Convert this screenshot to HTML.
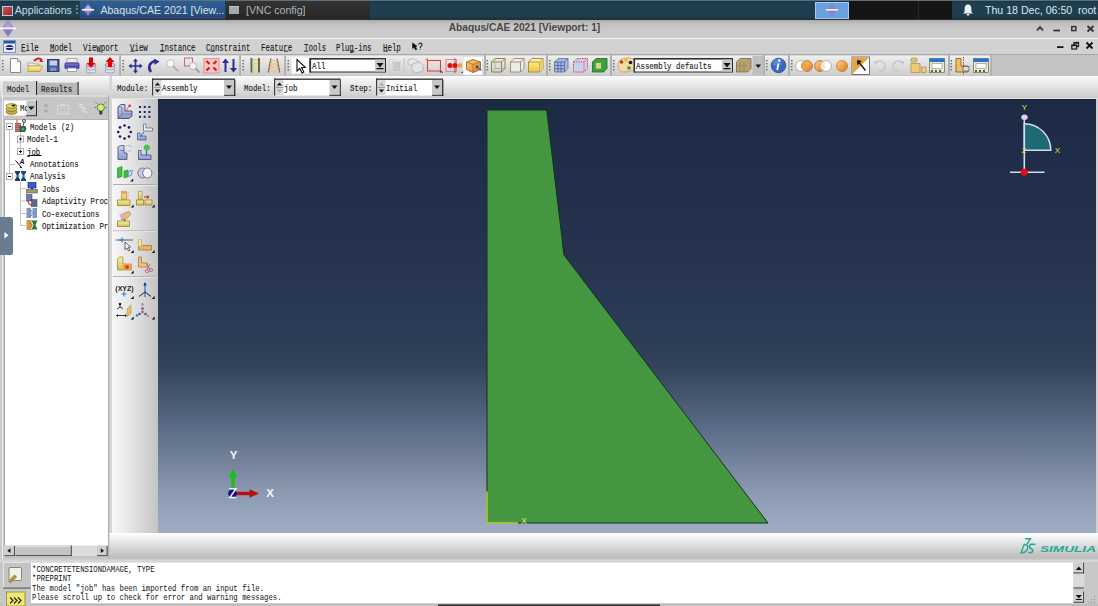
<!DOCTYPE html>
<html><head><meta charset="utf-8">
<style>
*{margin:0;padding:0;box-sizing:border-box}
html,body{width:1098px;height:606px;overflow:hidden;background:#d4d4d4;font-family:"Liberation Sans",sans-serif}
.a{position:absolute}
.mono{font-family:"Liberation Mono",monospace;white-space:pre;color:#1a1a1a;-webkit-text-stroke:0.12px currentColor}
.menu{top:49px;font-size:10.2px;line-height:0;transform:scaleX(0.727);transform-origin:0 0;color:#151515}
.lbl{font-size:9.6px;line-height:0;transform:scaleX(0.772);transform-origin:0 0;color:#151515}
.tree{font-size:9.4px;line-height:0;transform:scaleX(0.785);transform-origin:0 0;color:#151515}
.msg{font-size:9.2px;line-height:0;transform:scaleX(0.794);transform-origin:0 0;color:#111;-webkit-text-stroke:0}
.sans{font-family:"Liberation Sans",sans-serif;white-space:pre}
</style></head><body>
<!-- taskbar -->
<div class="a" style="left:0;top:0;width:1098px;height:20px;background:linear-gradient(#1a2f3c 0px,#1e3f50 3px,#1e3f4f 16px,#182e3a 20px)"></div>
<div class="a" style="left:0;top:0;width:1098px;height:1px;background:#5d6f7a"></div>
<div class="a" style="left:80px;top:1px;width:145px;height:18px;background:linear-gradient(#2d5d94,#2a5486 60%,#24456f)"></div>
<div class="a" style="left:226px;top:1px;width:144px;height:18px;background:linear-gradient(#343434,#262626)"></div>
<div class="a" style="left:815px;top:2px;width:34px;height:17px;background:#6aa0e0;border:1px solid #a4cdf6"></div>
<div class="a" style="left:849px;top:1px;width:103px;height:18px;background:#151515"></div>
<div class="a" style="left:0;top:19px;width:1098px;height:1px;background:#2a2f33"></div>

<!-- title bar -->
<div class="a" style="left:0;top:20px;width:1098px;height:18px;background:linear-gradient(#a9a9a9 0px,#c2c2c2 4px,#cacaca 10px,#cdcdcd 18px)"></div>
<!-- menu bar -->
<div class="a" style="left:0;top:38px;width:1098px;height:17px;background:#d2d2d2;border-top:1px solid #ececec"></div>
<!-- toolbar -->

<!-- module row -->



<!-- taskbar content -->
<div class="a" style="left:2px;top:6px;width:11px;height:10px;border:1px solid #c9c6cf;background:linear-gradient(135deg,#d85050,#8a2a30)"></div>
<div class="a sans" style="left:14.8px;top:5.2px;font-size:10.6px;line-height:10.5px;color:#cdd8df">Applications</div>
<div class="a" style="left:76px;top:5px;width:2px;height:10px;background:repeating-linear-gradient(#5f7f8e 0 2px,transparent 2px 3.5px)"></div>
<svg class="a" style="left:82px;top:4px" width="12" height="12" viewBox="0 0 12 12"><path d="M6 0 L11 5.5 L6 12 L1 5.5Z" fill="#8e80c8"/><path d="M6 1 L9 5 L3 5Z" fill="#b8b0e8"/><rect x="0" y="5" width="12" height="1.6" fill="#f4f4ff"/></svg>
<div class="a sans" style="left:100.4px;top:5.2px;font-size:10.6px;line-height:10.5px;color:#d6e0e8">Abaqus/CAE 2021 [View...</div>
<div class="a" style="left:229px;top:6px;width:10px;height:8px;background:#a8a8a8;border-top:1px solid #c8c8c8"></div>
<div class="a sans" style="left:246px;top:5.2px;font-size:10.6px;line-height:10.5px;color:#b2b2b2">[VNC config]</div>
<svg class="a" style="left:826px;top:4px" width="12" height="12" viewBox="0 0 12 12"><path d="M6 0 L11 5.5 L6 12 L1 5.5Z" fill="#8e80c8"/><rect x="0" y="5" width="12" height="1.6" fill="#f4f4ff"/></svg>
<div class="a" style="left:918px;top:1px;width:1px;height:18px;background:#262626"></div>
<svg class="a" style="left:962px;top:4px" width="12" height="12" viewBox="0 0 12 12"><path d="M6 0.5 C3.2 0.5 2.6 3 2.6 5 L2.6 8 L1 9.6 L11 9.6 L9.4 8 L9.4 5 C9.4 3 8.8 0.5 6 0.5Z" fill="#f2f4f5"/><rect x="4.6" y="10" width="2.8" height="1.6" rx="0.8" fill="#f2f4f5"/></svg>
<div class="a sans" style="left:985px;top:5.2px;font-size:10.6px;line-height:10.5px;color:#dfe6eb">Thu 18 Dec, 06:50</div>
<div class="a sans" style="left:1078px;top:5.2px;font-size:10.6px;line-height:10.5px;color:#dfe6eb">root</div>

<!-- title bar content -->
<svg class="a" style="left:0px;top:20px" width="16" height="17" viewBox="0 0 16 17"><path d="M8 0 L14 8 L8 17 L2 8Z" fill="#8a7cc8"/><path d="M8 1 L12 7 L4 7Z" fill="#aaa0e0"/><rect x="0" y="7.3" width="16" height="2" fill="#f6f6ff"/></svg>
<div class="a sans" style="left:448.7px;top:23px;font-size:10.2px;line-height:10.2px;font-weight:bold;color:#474747">Abaqus/CAE 2021 [Viewport: 1]</div>
<svg class="a" style="left:1030px;top:20px" width="68" height="18" viewBox="0 0 68 18">
<path d="M7 10.5 L10 7.2 L13 10.5" stroke="#333" stroke-width="1.8" fill="none"/>
<rect x="23.5" y="9.6" width="6.5" height="1.8" fill="#333"/>
<rect x="41.8" y="6.6" width="4" height="4" stroke="#333" stroke-width="1.5" fill="none"/>
<path d="M57.5 6 L63.5 11.5 M63.5 6 L57.5 11.5" stroke="#333" stroke-width="1.8"/>
</svg>
<!-- menu bar content -->
<svg class="a" style="left:0;top:0" width="500" height="55"><rect x="21.3" y="50.7" width="4.4" height="0.9" fill="#222"/><rect x="50.2" y="50.7" width="4.4" height="0.9" fill="#222"/><rect x="96.9" y="50.7" width="4.4" height="0.9" fill="#222"/><rect x="130.4" y="50.7" width="4.4" height="0.9" fill="#222"/><rect x="160.0" y="50.7" width="4.4" height="0.9" fill="#222"/><rect x="210.4" y="50.7" width="4.4" height="0.9" fill="#222"/><rect x="283.8" y="50.7" width="4.4" height="0.9" fill="#222"/><rect x="304.0" y="50.7" width="4.4" height="0.9" fill="#222"/><rect x="350.2" y="50.7" width="4.4" height="0.9" fill="#222"/><rect x="383.6" y="50.7" width="4.4" height="0.9" fill="#222"/></svg>
<div class="a" style="left:0;top:38px;width:1098px;height:1px;background:#f4f4f4"></div>
<svg class="a" style="left:3px;top:40px" width="13" height="13" viewBox="0 0 13 13"><rect x="0.5" y="0.5" width="12" height="12" fill="#e8ecf8" stroke="#7b8fc8"/><rect x="1" y="1" width="11" height="2.5" fill="#2a50b0"/><ellipse cx="6.5" cy="7.5" rx="3.8" ry="2.6" fill="#1a2880"/><rect x="3" y="7" width="7" height="1" fill="#dde"/></svg>
<div class="a mono menu" style="left:calc(21.6px - 0.8px)">File</div>
<div class="a mono menu" style="left:calc(50.5px - 0.8px)">Model</div>
<div class="a mono menu" style="left:calc(83.8px - 0.8px)">Viewport</div>
<div class="a mono menu" style="left:calc(130.7px - 0.8px)">View</div>
<div class="a mono menu" style="left:calc(160.3px - 0.8px)">Instance</div>
<div class="a mono menu" style="left:calc(206.3px - 0.8px)">Constraint</div>
<div class="a mono menu" style="left:calc(261.8px - 0.8px)">Feature</div>
<div class="a mono menu" style="left:calc(304.3px - 0.8px)">Tools</div>
<div class="a mono menu" style="left:calc(337.2px - 0.8px)">Plug-ins</div>
<div class="a mono menu" style="left:calc(383.9px - 0.8px)">Help</div>
<svg class="a" style="left:405px;top:38px" width="25" height="16" viewBox="405 38 25 16"><path d="M412.6 43 L412.6 48.6 L414 47.3 L415.6 50 L416.8 49.3 L415.3 46.6 L417 46.3Z" fill="#0a0a0a" stroke="#0a0a0a" stroke-width="0.6"/><path d="M418.6 44.6 Q419 43.2 420.5 43.2 Q422.2 43.3 422 45 Q421.8 46 420.6 46.7 L420.1 48" fill="none" stroke="#333" stroke-width="1.2"/><rect x="419.5" y="48.8" width="1.2" height="1" fill="#555"/></svg>
<svg class="a" style="left:1050px;top:39px" width="48" height="15" viewBox="0 0 48 15">
<rect x="7" y="7.2" width="6.5" height="1.8" fill="#1a1a1a"/>
<rect x="24" y="3.5" width="4.5" height="4" stroke="#1a1a1a" stroke-width="1.2" fill="none"/>
<rect x="24" y="3.5" width="4.5" height="1.2" fill="#1a1a1a"/>
<rect x="21.8" y="6" width="4.8" height="4" stroke="#1a1a1a" stroke-width="1.2" fill="#d2d2d2"/>
<rect x="21.8" y="6" width="4.8" height="1.2" fill="#1a1a1a"/>
<path d="M36.5 3.5 L42.5 9.5 M42.5 3.5 L36.5 9.5" stroke="#111" stroke-width="1.8"/>
</svg>

<svg class="a" style="left:0;top:0" width="1098" height="99" viewBox="0 0 1098 99">
<defs>
<linearGradient id="tbg" x1="0" y1="0" x2="0" y2="1"><stop offset="0" stop-color="#efefef"/><stop offset="1" stop-color="#cdcdcd"/></linearGradient>
<linearGradient id="mrow" x1="0" y1="0" x2="0" y2="1"><stop offset="0" stop-color="#fbfbfb"/><stop offset="1" stop-color="#c9c9c9"/></linearGradient>
<linearGradient id="yel" x1="0" y1="0" x2="0" y2="1"><stop offset="0" stop-color="#fff6b0"/><stop offset="1" stop-color="#e8c440"/></linearGradient>
<linearGradient id="org" x1="0" y1="0" x2="1" y2="1"><stop offset="0" stop-color="#ffd27a"/><stop offset="1" stop-color="#e07820"/></linearGradient>
<g id="grip"><rect x="0" y="0" width="1.5" height="1.5" fill="#707070"/><rect x="0" y="3" width="1.5" height="1.5" fill="#707070"/><rect x="0" y="6" width="1.5" height="1.5" fill="#707070"/><rect x="0" y="9" width="1.5" height="1.5" fill="#707070"/></g>
<g id="tri"><path d="M0 0 L2.5 0 L2.5 -2.5Z" fill="#111"/></g>
</defs>
<!-- toolbar base -->
<rect x="0" y="54" width="1098" height="1" fill="#a9a9a9"/>
<rect x="0" y="55" width="1098" height="21" fill="#c3c3c3"/>
<!-- groups -->
<rect x="0.5" y="55.5" width="119" height="20" fill="url(#tbg)"/>
<rect x="121" y="55.5" width="118.5" height="20" fill="url(#tbg)"/>
<rect x="241" y="55.5" width="43.5" height="20" fill="url(#tbg)"/>
<rect x="286" y="55.5" width="198" height="20" fill="url(#tbg)"/>
<rect x="486" y="55.5" width="60" height="20" fill="url(#tbg)"/>
<rect x="548" y="55.5" width="62" height="20" fill="url(#tbg)"/>
<rect x="612" y="55.5" width="151" height="20" fill="url(#tbg)"/>
<rect x="765" y="55.5" width="23" height="20" fill="url(#tbg)"/>
<rect x="790" y="55.5" width="158" height="20" fill="url(#tbg)"/>
<rect x="950" y="55.5" width="40.5" height="20" fill="url(#tbg)"/>
<g fill="#9e9e9e">
<rect x="119.5" y="55.5" width="1" height="20"/><rect x="239.5" y="55.5" width="1" height="20"/><rect x="284.5" y="55.5" width="1" height="20"/><rect x="484.5" y="55.5" width="1" height="20"/><rect x="546.5" y="55.5" width="1" height="20"/><rect x="610.5" y="55.5" width="1" height="20"/><rect x="763.5" y="55.5" width="1" height="20"/><rect x="788.5" y="55.5" width="1" height="20"/><rect x="948.5" y="55.5" width="1" height="20"/><rect x="990.5" y="55.5" width="1" height="20"/>
</g>
<use href="#grip" x="2" y="60"/><use href="#grip" x="122.5" y="60"/><use href="#grip" x="242.5" y="60"/><use href="#grip" x="287.5" y="60"/><use href="#grip" x="486.5" y="60"/><use href="#grip" x="549" y="60"/><use href="#grip" x="613" y="60"/><use href="#grip" x="766" y="60"/><use href="#grip" x="791" y="60"/><use href="#grip" x="950.5" y="60"/>

<!-- G1 icons -->
<path d="M10.5 58.5 L17.5 58.5 L20.5 61.5 L20.5 72.5 L10.5 72.5Z" fill="#fbfbfb" stroke="#8a8a8a"/>
<path d="M17.5 58.5 L17.5 61.5 L20.5 61.5" fill="#ddd" stroke="#8a8a8a" stroke-width="0.8"/>
<path d="M28 63 L33 63 L34 64 L39 64 L39 66 L28 66Z" fill="#f4f4f4" stroke="#999" stroke-width="0.8"/>
<path d="M28 66 L42.5 66 L40 71.5 L28 71.5Z" fill="url(#yel)" stroke="#b89a40" stroke-width="0.8"/>
<path d="M34 61 Q38 56.5 42 60" stroke="#d02020" stroke-width="2" fill="none"/><path d="M40.5 58 L43.5 62 L39.5 62Z" fill="#d02020"/>
<rect x="47.5" y="59.5" width="11.5" height="12" fill="#3a5a9a" stroke="#2a4070"/>
<rect x="49.5" y="60.5" width="7.5" height="5" fill="#c8d0e0"/>
<rect x="50" y="67.5" width="6.5" height="3.5" fill="#8090b0"/>
<rect x="67" y="58.5" width="10" height="4" fill="#f0f0f0" stroke="#999" stroke-width="0.8"/>
<rect x="64.5" y="62.5" width="15" height="6.5" rx="1.5" fill="#4a4aa8"/>
<rect x="66" y="63.5" width="12" height="2" fill="#7070c8"/>
<rect x="67.5" y="68" width="9" height="3.5" fill="#fff" stroke="#8888b8" stroke-width="0.8"/>
<g><ellipse cx="91" cy="71" rx="5" ry="2" fill="#dde4f0" stroke="#8a9ab8" stroke-width="0.8"/><ellipse cx="91" cy="68" rx="5" ry="2" fill="#eed0e0" stroke="#8a9ab8" stroke-width="0.8"/><ellipse cx="91" cy="65" rx="5" ry="2" fill="#e8c0d0" stroke="#6a7a98" stroke-width="0.8"/><rect x="89" y="57.5" width="4" height="6" fill="#e00000"/><path d="M86.5 63 L95.5 63 L91 67.5Z" fill="#e00000"/></g>
<g><ellipse cx="110" cy="71" rx="5" ry="2" fill="#dde4f0" stroke="#8a9ab8" stroke-width="0.8"/><ellipse cx="110" cy="68" rx="5" ry="2" fill="#eed0e0" stroke="#8a9ab8" stroke-width="0.8"/><ellipse cx="110" cy="65" rx="5" ry="2" fill="#e8c0d0" stroke="#6a7a98" stroke-width="0.8"/><rect x="108" y="61" width="4" height="6" fill="#e00000"/><path d="M105.5 62 L114.5 62 L110 57Z" fill="#e00000"/></g>

<!-- G2 icons -->
<g fill="#2e2e90" stroke="#2e2e90">
<path d="M135.5 60 L135.5 72 M129.5 66 L141.5 66" stroke-width="1.6"/>
<path d="M135.5 58.5 L133 61.5 L138 61.5Z M135.5 73.5 L133 70.5 L138 70.5Z M128.5 66 L131.5 63.5 L131.5 68.5Z M142.5 66 L139.5 63.5 L139.5 68.5Z" stroke="none"/>
<path d="M151 72 C148 68 148.5 63 155 61" fill="none" stroke-width="2.6"/>
<path d="M154 58.5 L159.5 61.5 L154.5 65Z" stroke="none"/>
<path d="M225.5 72 L225.5 61" stroke-width="2"/><path d="M225.5 58.5 L222 63 L229 63Z" stroke="none"/>
<path d="M233.5 59 L233.5 70" stroke-width="2"/><path d="M233.5 72.5 L230 68 L237 68Z" stroke="none"/>
</g>
<circle cx="170.5" cy="63.5" r="3.8" fill="#f8f8f8" stroke="#b8b8b8" stroke-width="0.9"/>
<path d="M173 66 L178.5 71.5" stroke="#a8b088" stroke-width="1.6"/>
<rect x="184.5" y="58" width="8" height="8" fill="none" stroke="#d06080" stroke-width="1"/>
<circle cx="193" cy="66" r="3.5" fill="#f4f4f4" stroke="#b0b0b0" stroke-width="0.9"/>
<path d="M195.5 68.5 L199.5 72.5" stroke="#909090" stroke-width="1.6"/>
<rect x="204" y="58.5" width="15" height="14.5" fill="#f0c8c8" stroke="#e08080" stroke-width="0.8"/>
<g stroke="#e01010" stroke-width="2"><path d="M206.5 61 L209.5 64 M216.5 61 L213.5 64 M206.5 70.5 L209.5 67.5 M216.5 70.5 L213.5 67.5"/></g>

<!-- G3 icons -->
<g><rect x="250.5" y="58" width="2" height="14.5" fill="#6a6a3a"/><rect x="258" y="58" width="2" height="14.5" fill="#6a6a3a"/>
<g fill="#d8d890"><rect x="252.5" y="59" width="5.5" height="2"/><rect x="252.5" y="62.5" width="5.5" height="2"/><rect x="252.5" y="66" width="5.5" height="2"/><rect x="252.5" y="69.5" width="5.5" height="2"/></g></g>
<g><path d="M271 58.5 L268.5 72.5 M277 58.5 L279.5 72.5" stroke="#8a6a4a" stroke-width="1.6"/>
<g fill="#e8c898"><rect x="270.5" y="59.5" width="7" height="2"/><rect x="270" y="63" width="8" height="2"/><rect x="269.5" y="66.5" width="9" height="2"/><rect x="269" y="70" width="10" height="2"/></g></g>

<!-- G4 -->
<rect x="291.5" y="57.5" width="18" height="16" fill="#fff"/>
<path d="M297 59.5 L297 71 L299.8 68.5 L302 73 L303.8 72 L301.6 67.6 L305.3 67.3Z" fill="#fff" stroke="#111" stroke-width="1.1"/>
<rect x="310" y="58.5" width="75.5" height="13.5" fill="#fff" stroke="#2a2a2a" stroke-width="1"/>
<rect x="310" y="58" width="76" height="1.6" fill="#333"/><rect x="309.5" y="58" width="1.6" height="14.5" fill="#333"/>
<rect x="375" y="59.5" width="10" height="12" fill="#c8c8c8"/>
<path d="M376.5 63 L383.5 63 L380 67.5Z" fill="#111"/><rect x="376.5" y="68" width="7" height="1.2" fill="#111"/>
<rect x="392.5" y="61.5" width="8" height="10" fill="#c8c8c8" stroke="#d8d8d8" stroke-width="0.8"/>
<rect x="389.5" y="59.5" width="6" height="6" fill="none" stroke="#d4d4d4" stroke-width="0.8"/>
<rect x="403.5" y="58" width="1" height="15" fill="#c4c4c4"/>
<path d="M408 60 L413 58.5 L418 61 L418 64 L413 66 L408 64Z" fill="#e8e8e8" stroke="#b4b4b4" stroke-width="0.8"/>
<path d="M412 64 L419 62 L423 65 L423 71 L416 73 L412 70Z" fill="#e4e4e4" stroke="#b0b0b0" stroke-width="0.8"/>
<rect x="427.5" y="60.5" width="13" height="10.5" fill="none" stroke="#e04040" stroke-width="1.1"/>
<path d="M425.5 60 L428 58.5 M441 71 L443 73" stroke="#e03030" stroke-width="1"/>
<path d="M439.5 72.5 L441.5 72.5 L441.5 70.5Z" fill="#111"/>
<rect x="446" y="59.5" width="10.5" height="12" fill="none" stroke="#f08080" stroke-width="1"/>
<circle cx="450" cy="65.5" r="2.5" fill="#e01010"/><circle cx="455" cy="65.5" r="2.5" fill="#e01010"/>
<path d="M455 58.5 L455 73" stroke="#e01010" stroke-width="0.8"/>
<circle cx="460" cy="65.5" r="2.3" fill="#e8a040"/>
<path d="M461 73 L463 73 L463 71Z" fill="#111"/>
<rect x="463" y="56.5" width="19.5" height="18.5" fill="#fcfcfc" stroke="#d8d8d8" stroke-width="0.6"/>
<path d="M466.5 62 L473 59.5 L480.5 62 L480.5 69.5 L473 72.5 L466.5 69.5Z" fill="url(#org)" stroke="#8a5a20" stroke-width="0.8"/>
<path d="M466.5 62 L473 64.5 L480.5 62 M473 64.5 L473 72.5" fill="none" stroke="#a86a20" stroke-width="0.7"/>
<circle cx="477" cy="67" r="1.4" fill="#1a4a6a"/><path d="M477 67 L481.5 70.5" stroke="#2a70c0" stroke-width="1.2"/>

<!-- G5 cubes -->
<g fill="none" stroke="#8a7a40" stroke-width="0.9">
<path d="M491.5 62 L495 58.5 L505 58.5 L505 68.5 L501.5 72 L491.5 72Z M491.5 62 L501.5 62 L505 58.5 M501.5 62 L501.5 72"/>
<path d="M491.5 72 L495 68.5 L505 68.5 M495 58.5 L495 68.5" stroke="#b0a070" stroke-width="0.7"/>
</g>
<path d="M510.5 62 L514 58.5 L524 58.5 L524 68.5 L520.5 72 L510.5 72Z" fill="#ececec" stroke="#9a8a60" stroke-width="0.9"/>
<path d="M510.5 62 L520.5 62 L524 58.5 M520.5 62 L520.5 72" fill="none" stroke="#9a8a60" stroke-width="0.9"/>
<path d="M528.5 62 L532 58.5 L543 58.5 L543 68.5 L539.5 72 L528.5 72Z" fill="url(#yel)" stroke="#a08830" stroke-width="0.9"/>
<path d="M528.5 62 L539.5 62 L543 58.5 M539.5 62 L539.5 72" fill="none" stroke="#a08830" stroke-width="0.8"/>
<path d="M539.5 62 L543 58.5 L543 68.5 L539.5 72Z" fill="#e8d060"/>

<!-- G6 cubes -->
<path d="M554.5 62 L558 58.5 L568 58.5 L568 68.5 L564.5 72 L554.5 72Z" fill="#a8b8e0" stroke="#6070a0" stroke-width="0.8"/>
<g stroke="#40508a" stroke-width="0.7" fill="none"><path d="M558 62 L558 72 M561 62 L561 72 M554.5 65.5 L564.5 65.5 M554.5 68.8 L564.5 68.8 M554.5 62 L564.5 62 L568 58.5 M564.5 62 L564.5 72"/></g>
<path d="M573.5 62 L577 58.5 L587.5 58.5 L587.5 68.5 L584 72 L573.5 72Z" fill="#c8d0f0" stroke="#e04060" stroke-width="1" stroke-dasharray="1.5 1"/>
<path d="M573.5 62 L584 62 L587.5 58.5 M584 62 L584 72" fill="none" stroke="#e04060" stroke-width="0.8" stroke-dasharray="1.5 1"/>
<path d="M592.5 62 L596 58.5 L607 58.5 L607 68.5 L603.5 72 L592.5 72Z" fill="#3aa040" stroke="#1e6a20" stroke-width="0.8"/>
<rect x="595.5" y="62.5" width="6" height="6.5" fill="#c8d890" stroke="#6a8a40" stroke-width="0.7"/>

<!-- G7 -->
<path d="M618 66 C617 60 623 57.5 629 58 C635 58.5 636.5 63 635 67 C633.5 70.5 630 72 624 72 C619.5 72 618.5 69 618 66Z" fill="#f4d8a8" stroke="#b89060" stroke-width="0.7"/>
<circle cx="621.5" cy="62" r="1.8" fill="#d03010"/><circle cx="626" cy="60" r="1.8" fill="#e8c020"/><circle cx="630.5" cy="62.5" r="1.8" fill="#101850"/><circle cx="629" cy="68" r="1.8" fill="#20a020"/>
<rect x="634.5" y="58.5" width="98" height="13.5" fill="#fff" stroke="#2a2a2a" stroke-width="1"/><rect x="634" y="58" width="99" height="1.6" fill="#333"/><rect x="633.5" y="58" width="1.6" height="14.5" fill="#333"/>
<rect x="722" y="59.5" width="10" height="12" fill="#c8c8c8"/>
<path d="M723.5 63 L730.5 63 L727 67.5Z" fill="#111"/><rect x="723.5" y="68" width="7" height="1.2" fill="#111"/>
<path d="M736.5 62 L740 58.5 L751 58.5 L751 68.5 L747.5 72 L736.5 72Z" fill="#b8a070" stroke="#7a6a40" stroke-width="0.8"/>
<g stroke="#8a7a50" stroke-width="0.5"><path d="M740 62 L740 72 M744 62 L744 72 M736.5 66 L747.5 66"/></g>
<rect x="752.5" y="56" width="11" height="19" fill="#c0c0c0"/>
<path d="M755.5 64.5 L761 64.5 L758.2 68Z" fill="#111"/>

<!-- G8 info -->
<circle cx="778.5" cy="65.5" r="7.3" fill="#3a6ac0" stroke="#2a4a90" stroke-width="0.8"/>
<ellipse cx="777" cy="62.5" rx="4.5" ry="3.5" fill="#6a9ae0" opacity="0.6"/>
<path d="M778.5 63.5 L777.2 70" stroke="#fff" stroke-width="1.8"/><circle cx="779.3" cy="60.5" r="1.2" fill="#fff"/>

<!-- G9 -->
<circle cx="801" cy="66" r="5.4" fill="#fff" stroke="#a0a0a0" stroke-width="0.8"/>
<circle cx="807" cy="66" r="5.4" fill="url(#org)" stroke="#a07030" stroke-width="0.8"/>
<path d="M804 61.5 A5.4 5.4 0 0 1 804 70.5 A5.4 5.4 0 0 1 804 61.5Z" fill="#f0a040"/>
<circle cx="820" cy="66" r="5.4" fill="url(#org)" stroke="#a07030" stroke-width="0.8"/>
<circle cx="826" cy="66" r="5.4" fill="#fff" stroke="#a0a0a0" stroke-width="0.8"/>
<path d="M823 61.5 A5.4 5.4 0 0 1 823 70.5 A5.4 5.4 0 0 1 823 61.5Z" fill="#f4e4d0"/>
<circle cx="842" cy="66" r="5.5" fill="url(#org)" stroke="#b07030" stroke-width="0.7"/>
<rect x="852" y="57" width="17.5" height="17.5" fill="#fff" stroke="#555" stroke-width="0.8"/>
<path d="M852.5 57.5 L869 57.5 L852.5 74Z" fill="#e8a440"/>
<path d="M857 60 L862 61 L860 62.5 L866 70 L865 71 L859 63.5 L857.5 65.5Z" fill="#111"/>
<path d="M876 63 A5 5 0 1 1 879 71" fill="none" stroke="#c8c8c8" stroke-width="1.6"/><path d="M873.5 61 L878.5 61.5 L875 65Z" fill="#c8c8c8"/>
<path d="M902 63 A5 5 0 1 0 899 71" fill="none" stroke="#c8c8c8" stroke-width="1.6"/><path d="M904.5 61 L899.5 61.5 L903 65Z" fill="#c8c8c8"/>
<rect x="911" y="58" width="6" height="4" rx="1" fill="#e8c070" stroke="#a08040" stroke-width="0.6"/>
<rect x="911" y="63.5" width="9" height="9" fill="#f0c878" stroke="#a08040" stroke-width="0.6"/>
<rect x="921.5" y="67" width="4.5" height="5.5" fill="#f0c878" stroke="#a08040" stroke-width="0.6"/>
<rect x="929.5" y="58.5" width="15" height="14" fill="#e8e8d8" stroke="#6a6a40" stroke-width="0.7"/>
<rect x="929.5" y="58.5" width="15" height="3.5" fill="#2a70c8"/>
<rect x="932" y="63.5" width="10" height="5" fill="#fff" stroke="#8a8a70" stroke-width="0.6"/>
<g fill="#4a6a2a"><rect x="931" y="70" width="2" height="2"/><rect x="935" y="70" width="2" height="2"/><rect x="939" y="70" width="2" height="2"/></g>

<!-- G10 -->
<path d="M956 58.5 L961 58.5 L961 66 L968 66 L968 72 L956 72Z" fill="#f0c060" stroke="#7a5a20" stroke-width="0.8"/>
<path d="M963.5 57 L963.5 75" stroke="#e02020" stroke-width="0.9" stroke-dasharray="1.5 1"/>
<rect x="963" y="66.5" width="6" height="4.5" fill="#dcdcdc" stroke="#444" stroke-width="0.6"/>
<rect x="973.5" y="58.5" width="15" height="14" fill="#e8e8d8" stroke="#6a6a40" stroke-width="0.7"/>
<rect x="973.5" y="58.5" width="15" height="3.5" fill="#2a70c8"/>
<rect x="976" y="63.5" width="10" height="5" fill="#fff" stroke="#8a8a70" stroke-width="0.6"/>
<g fill="#4a6a2a"><rect x="975" y="70" width="2" height="2"/><rect x="979" y="70" width="2" height="2"/><rect x="983" y="70" width="2" height="2"/></g>

<!-- module row -->
<rect x="0" y="76" width="1098" height="22.5" fill="url(#mrow)"/>
<rect x="112" y="98" width="986" height="1" fill="#e4e4e4"/>
<g id="combos">
<g transform="translate(152,78.5)">
<rect x="0" y="0" width="83" height="17" fill="#fff"/>
<rect x="0" y="0" width="83" height="1.4" fill="#3a3a3a"/><rect x="0" y="0" width="1.4" height="17" fill="#3a3a3a"/>
<rect x="82" y="1" width="1.4" height="16.4" fill="#3a3a3a"/><rect x="72" y="16" width="11.4" height="1.4" fill="#3a3a3a"/>
<rect x="1.5" y="1.5" width="8" height="15" fill="#d8d8d8"/>
<path d="M2.8 7 L5.5 4 L8.2 7Z M2.8 11 L5.5 14 L8.2 11Z" fill="#111"/>
<rect x="2" y="8.5" width="7" height="1" fill="#999"/>
<rect x="72" y="1.5" width="10" height="14.5" fill="#c8c8c8"/>
<path d="M74 7 L80 7 L77 10.5Z" fill="#111"/>
</g>
<g transform="translate(274,78.5)">
<rect x="0" y="0" width="66.5" height="17" fill="#fff"/>
<rect x="0" y="0" width="66.5" height="1.4" fill="#3a3a3a"/><rect x="0" y="0" width="1.4" height="17" fill="#3a3a3a"/>
<rect x="65.5" y="1" width="1.4" height="16.4" fill="#3a3a3a"/><rect x="55.5" y="16" width="11.4" height="1.4" fill="#3a3a3a"/>
<rect x="1.5" y="1.5" width="8" height="15" fill="#d8d8d8"/>
<path d="M2.8 7 L5.5 4 L8.2 7Z" fill="#111"/><path d="M2.8 11 L5.5 14 L8.2 11Z" fill="#aaa"/>
<rect x="2" y="8.5" width="7" height="1" fill="#999"/>
<rect x="55.5" y="1.5" width="10" height="14.5" fill="#c8c8c8"/>
<path d="M57.5 7 L63.5 7 L60.5 10.5Z" fill="#111"/>
</g>
<g transform="translate(376,78.5)">
<rect x="0" y="0" width="67" height="17" fill="#fff"/>
<rect x="0" y="0" width="67" height="1.4" fill="#3a3a3a"/><rect x="0" y="0" width="1.4" height="17" fill="#3a3a3a"/>
<rect x="66" y="1" width="1.4" height="16.4" fill="#3a3a3a"/><rect x="56" y="16" width="11.4" height="1.4" fill="#3a3a3a"/>
<rect x="1.5" y="1.5" width="8" height="15" fill="#d8d8d8"/>
<path d="M2.8 7 L5.5 4 L8.2 7Z" fill="#aaa"/><path d="M2.8 11 L5.5 14 L8.2 11Z" fill="#111"/>
<rect x="2" y="8.5" width="7" height="1" fill="#999"/>
<rect x="56" y="1.5" width="10" height="14.5" fill="#c8c8c8"/>
<path d="M58 7 L64 7 L61 10.5Z" fill="#111"/>
</g>
</g>
</svg>

<div class="a mono lbl" style="left:117px;top:88.8px">Module:</div>
<div class="a mono lbl" style="left:161.5px;top:88.8px">Assembly</div>
<div class="a mono lbl" style="left:243.5px;top:88.8px">Model:</div>
<div class="a mono lbl" style="left:283.5px;top:88.8px">job</div>
<div class="a mono lbl" style="left:350px;top:88.8px">Step:</div>
<div class="a mono lbl" style="left:385.5px;top:88.8px">Initial</div>
<div class="a mono lbl" style="left:311.5px;top:67.3px">All</div>
<div class="a mono lbl" style="left:636px;top:67.3px">Assembly defaults</div>
<!-- left panel -->
<svg class="a" style="left:0;top:76px" width="112" height="486" viewBox="0 76 112 486">
<defs>
<linearGradient id="yel2" x1="0" y1="0" x2="0" y2="1"><stop offset="0" stop-color="#fff3a0"/><stop offset="1" stop-color="#d8b030"/></linearGradient>
</defs>
<rect x="0" y="76" width="112" height="486" fill="#c9c9c9"/>
<rect x="0" y="76" width="112" height="22.5" fill="url(#mrow)"/>
<!-- tabs -->
<path d="M2 98 L2 81 L36.5 81 L36.5 98Z" fill="#cdcdcd"/>
<path d="M2 98 L2 80.8 L36 80.8" fill="none" stroke="#f4f4f4" stroke-width="1"/>
<rect x="36" y="81" width="1.3" height="14" fill="#2a2a2a"/>
<rect x="37.3" y="82.5" width="41" height="12.5" fill="#b8b8b8"/>
<rect x="37.3" y="82" width="41" height="0.8" fill="#e0e0e0"/>
<rect x="77.5" y="82" width="1.2" height="13" fill="#3a3a3a"/>
<!-- panel -->
<rect x="2" y="95.5" width="106.5" height="465" fill="#c6c6c6"/>
<rect x="2" y="95.5" width="106.5" height="1" fill="#ececec"/>
<rect x="2" y="95.5" width="1" height="465" fill="#ececec"/>
<rect x="108.3" y="95.5" width="1" height="465" fill="#a0a0a0"/>
<rect x="109.3" y="76" width="2.7" height="486" fill="#d6d6d6"/>
<!-- combo Mo -->
<rect x="4" y="100.5" width="32.5" height="15" fill="#fff"/>
<rect x="36" y="100.5" width="1" height="15.5" fill="#2a2a2a"/><rect x="26" y="115.2" width="11" height="1" fill="#2a2a2a"/>
<rect x="26.5" y="101" width="9.5" height="14" fill="#c4c4c4"/>
<path d="M28 106.5 L34.5 106.5 L31.2 110Z" fill="#111"/>
<g><ellipse cx="11.5" cy="112" rx="5.5" ry="2.3" fill="#c8b040" stroke="#6a5a10" stroke-width="0.7"/><ellipse cx="11.5" cy="109" rx="5.5" ry="2.3" fill="#d8c050" stroke="#6a5a10" stroke-width="0.7"/><ellipse cx="11.5" cy="106" rx="5.5" ry="2.3" fill="#e8d870" stroke="#6a5a10" stroke-width="0.7"/><ellipse cx="13.5" cy="105.5" rx="2" ry="1" fill="#222"/></g>
<!-- icon row -->
<path d="M43.5 106.5 L46 103.2 L48.5 106.5Z M43.5 110 L46 113.3 L48.5 110Z" fill="#a8a8a8"/><rect x="43.5" y="107.8" width="5" height="1" fill="#b8b8b8"/>
<rect x="57.5" y="105.5" width="11" height="8.5" fill="none" stroke="#dadada" stroke-width="1"/><rect x="60" y="103.8" width="5" height="1.8" fill="#dadada"/><rect x="60" y="107.5" width="5" height="4" fill="none" stroke="#d0d0d0" stroke-width="0.8"/>
<path d="M78 104 L82 104.5 L80 107 L85 108 L82 110.5 L87.5 112.5" fill="none" stroke="#dcdcdc" stroke-width="1.3"/>
<circle cx="100.8" cy="107.5" r="3.6" fill="#e8e870" stroke="#3a8a3a" stroke-width="1"/><rect x="99.3" y="111" width="3" height="3.5" fill="#2a4a2a"/>
<path d="M95.5 102 L97 103.5 M106 102 L104.5 103.5 M94.5 107.5 L96 107.5 M105.5 107.5 L107 107.5" stroke="#556" stroke-width="0.8"/>
<!-- tree -->
<rect x="4" y="119" width="104" height="427" fill="#fff"/>
<rect x="4" y="119" width="1" height="427" fill="#a8a8a8"/>
<rect x="4" y="119" width="104" height="0.8" fill="#a0a0a0"/>
<!-- tree lines -->
<g stroke="#c4c4c4" stroke-width="1" fill="none">
<path d="M9.5 130 L9.5 173 M9.5 164.5 L15 164.5"/>
<path d="M20.5 131 L20.5 136 M20.5 142 L20.5 148"/>
<path d="M20.5 182 L20.5 226 M20.5 188.5 L26 188.5 M20.5 201 L26 201 M20.5 213.5 L26 213.5 M20.5 225.5 L26 225.5"/>
</g>
<!-- expanders -->
<g fill="#fff" stroke="#9a9a9a" stroke-width="0.8">
<rect x="6.5" y="123.5" width="6" height="6"/><rect x="17.5" y="136" width="6" height="6"/><rect x="17.5" y="148.5" width="6" height="6"/><rect x="6.5" y="173.5" width="6" height="6"/>
</g>
<g stroke="#111" stroke-width="1">
<path d="M8 126.5 L11 126.5"/><path d="M19 139 L22 139 M20.5 137.5 L20.5 140.5"/><path d="M19 151.5 L22 151.5 M20.5 150 L20.5 153"/><path d="M8 176.5 L11 176.5"/>
</g>
<!-- models icon -->
<g><rect x="15" y="123" width="6" height="9" fill="#a05050"/><path d="M15 124.5 L21 124.5 M15 126.5 L21 126.5 M15 128.5 L21 128.5 M15 130.5 L21 130.5" stroke="#e0a0a0" stroke-width="0.7"/>
<path d="M19.5 126 L25.5 126 L26.5 129 L25 132 L19.5 132Z" fill="#2a6a4a"/><circle cx="23" cy="129" r="1.5" fill="#5aa07a"/>
<path d="M17 119.5 L17 123" stroke="#e03050" stroke-width="1"/><circle cx="24" cy="121" r="1.5" fill="#fff" stroke="#222" stroke-width="0.8"/><path d="M24 122.5 L23 126" stroke="#222" stroke-width="0.8"/></g>
<!-- annotations icon -->
<path d="M15.5 160.5 L21.5 167.5" stroke="#111" stroke-width="1"/><path d="M20.5 166 L22.5 168.5 L19.5 167.5Z" fill="#111"/><text x="22" y="163.8" font-family="Liberation Sans" font-weight="bold" font-style="italic" font-size="7" text-anchor="middle" fill="#111">A</text>
<!-- analysis icon -->
<g><path d="M15 171 L20 171 L20 172.5 L18.3 175 L18.3 177 L20 179.5 L20 181 L15 181 L15 179.5 L16.7 177 L16.7 175 L15 172.5Z" fill="#1a3a6a"/><rect x="15.5" y="175.5" width="4" height="1.2" fill="#4a8ac8"/>
<path d="M21 171 L26 171 L26 172.5 L24.3 175 L24.3 177 L26 179.5 L26 181 L21 181 L21 179.5 L22.7 177 L22.7 175 L21 172.5Z" fill="#1a4a7a"/><rect x="21.5" y="175.5" width="4" height="1.2" fill="#5a9ad0"/></g>
<!-- jobs icon -->
<rect x="28" y="182.5" width="8" height="5.5" fill="#3a5ad0" stroke="#1a2a80" stroke-width="0.7"/><rect x="31" y="188" width="2" height="1.5" fill="#2a2a50"/><rect x="26.5" y="189.5" width="11" height="3.5" fill="#9a9a7a" stroke="#5a5a40" stroke-width="0.6"/>
<!-- adaptivity icon -->
<rect x="26.5" y="194.5" width="5.5" height="6.5" fill="#6a7aaa" stroke="#3a3a6a" stroke-width="0.5"/><rect x="31.5" y="199.5" width="5.5" height="7" fill="#5a6a8a" stroke="#2a3a5a" stroke-width="0.5"/><path d="M28 201 Q28.5 205 32 205" stroke="#e01010" stroke-width="1.1" fill="none"/>
<!-- co-exec icon -->
<rect x="26.5" y="208" width="4.5" height="10" fill="#7a9ac0"/><rect x="32.5" y="208" width="4.5" height="10" fill="#7a9ac0"/><path d="M31 210 L32.5 213 L31 216" stroke="#e04060" stroke-width="1" fill="none"/><rect x="31" y="211" width="1.5" height="4" fill="#c0c8d8"/>
<!-- optimization icon -->
<rect x="26.5" y="220" width="5" height="10" fill="#c8a040"/><path d="M31.5 220.5 L37.5 220.5 L35.5 225 L37.5 229.5 L31.5 229.5 L33.5 225Z" fill="#2a7a3a"/><path d="M30 223 L32.5 225 L30 227" stroke="#e03030" stroke-width="0.9" fill="none"/>
<!-- job underline -->
<rect x="27.5" y="155" width="14" height="1" fill="#111"/>
<!-- slide tab -->
<path d="M0 217 L10.5 217 Q13 217 13 219.5 L13 252.5 Q13 255 10.5 255 L0 255Z" fill="#6c7c90"/>
<path d="M4.5 232 L8.5 235.2 L4.5 238.4Z" fill="#fff"/>
<!-- h scrollbar -->
<rect x="4.5" y="545.5" width="103" height="10.5" fill="#dcdcdc"/>
<rect x="4.5" y="545.5" width="10.5" height="10.5" fill="#d0d0d0"/><rect x="14" y="546" width="1" height="10" fill="#444"/><rect x="4.5" y="555.2" width="10.5" height="0.9" fill="#444"/>
<path d="M7.3 550.7 L10.5 548.3 L10.5 553.1Z" fill="#111"/>
<rect x="15.5" y="545.5" width="56" height="10.5" fill="#c4c4c4"/><rect x="70.8" y="545.5" width="1" height="10.5" fill="#444"/><rect x="15.5" y="555.2" width="56" height="0.9" fill="#444"/><rect x="15.5" y="545.8" width="55" height="0.8" fill="#ececec"/>
<rect x="97" y="545.5" width="10.5" height="10.5" fill="#d0d0d0"/><rect x="106.6" y="546" width="1" height="10" fill="#444"/><rect x="97" y="555.2" width="10.5" height="0.9" fill="#444"/>
<path d="M104 550.7 L100.8 548.3 L100.8 553.1Z" fill="#111"/>
</svg>
<div class="a mono lbl" style="left:7.2px;top:90px">Model</div>
<div class="a mono lbl" style="left:41.3px;top:90px">Results</div>
<div class="a" style="left:19px;top:100px;width:7.5px;height:15px;overflow:hidden"><div class="a mono lbl" style="left:0.5px;top:9.2px">Mo</div></div>
<div class="a mono tree" style="left:29.5px;top:127.8px">Models (2)</div>
<div class="a mono tree" style="left:26.8px;top:140.2px">Model-1</div>
<div class="a mono tree" style="left:27.3px;top:152.6px">job</div>
<div class="a mono tree" style="left:29.5px;top:165px">Annotations</div>
<div class="a mono tree" style="left:29.5px;top:177.4px">Analysis</div>
<div class="a mono tree" style="left:41.8px;top:189.8px">Jobs</div>
<div class="a mono tree" style="left:41.8px;top:202.2px">Adaptivity Proc</div>
<div class="a mono tree" style="left:41.8px;top:214.6px">Co-executions</div>
<div class="a mono tree" style="left:41.8px;top:227px">Optimization Pr</div>


<!-- toolbox -->
<svg class="a" style="left:112px;top:99px" width="46" height="434" viewBox="112 99 46 434">
<defs>
<linearGradient id="tbx" x1="0" y1="0" x2="1" y2="0"><stop offset="0" stop-color="#f7f7f7"/><stop offset="0.55" stop-color="#dedede"/><stop offset="1" stop-color="#c3c3c3"/></linearGradient>
<linearGradient id="blu" x1="0" y1="0" x2="0" y2="1"><stop offset="0" stop-color="#d0d8f4"/><stop offset="1" stop-color="#8898d0"/></linearGradient>
<linearGradient id="yl3" x1="0" y1="0" x2="0" y2="1"><stop offset="0" stop-color="#f8f0a0"/><stop offset="1" stop-color="#d8c050"/></linearGradient>
</defs>
<rect x="112" y="99" width="46" height="434" fill="url(#tbx)"/>
<rect x="113" y="184" width="43" height="0.9" fill="#a8a8a8"/><rect x="113" y="185" width="43" height="0.7" fill="#f4f4f4"/>
<rect x="113" y="230.5" width="43" height="0.9" fill="#a8a8a8"/><rect x="113" y="231.4" width="43" height="0.7" fill="#f4f4f4"/>
<rect x="113" y="276" width="43" height="0.9" fill="#a8a8a8"/><rect x="113" y="276.9" width="43" height="0.7" fill="#f4f4f4"/>
<!-- row1 -->
<path d="M118 107 L121 104.5 L125 104.5 L125 111 L132 111 L132 116 L129 118.5 L118 118.5Z" fill="url(#blu)" stroke="#4a4a6a" stroke-width="0.9"/>
<path d="M118 107 L122 107 L122 114 L132 114 M122 114 L118 118.5" fill="none" stroke="#5a5a80" stroke-width="0.6"/>
<path d="M126.5 111 Q127 108 129.5 106" stroke="#d04040" stroke-width="0.8" fill="none"/><circle cx="129.7" cy="105.7" r="1.3" fill="#e02020"/>
<g fill="#1e1e6e"><rect x="139" y="106" width="2" height="2"/><rect x="143.7" y="106" width="2" height="2"/><rect x="148.4" y="106" width="2" height="2"/><rect x="139" y="111" width="2" height="2"/><rect x="143.7" y="111" width="2" height="2"/><rect x="148.4" y="111" width="2" height="2"/><rect x="139" y="115.8" width="2" height="2"/><rect x="143.7" y="115.8" width="2" height="2"/><rect x="148.4" y="115.8" width="2" height="2"/></g>
<!-- row2 -->
<g fill="#1e1e5e"><circle cx="124.5" cy="125.5" r="1.35"/><circle cx="129" cy="127.4" r="1.35"/><circle cx="130.8" cy="132" r="1.35"/><circle cx="129" cy="136.6" r="1.35"/><circle cx="124.5" cy="138.5" r="1.35"/><circle cx="120" cy="136.6" r="1.35"/><circle cx="118.2" cy="132" r="1.35"/><circle cx="120" cy="127.4" r="1.35"/></g>
<path d="M143.5 124 L146 124 L146 128 L152.5 128 L152.5 131 L143.5 131Z" fill="#eceef4" stroke="#6a6a80" stroke-width="0.8"/>
<path d="M137.5 133 L140 133 L140 136 L146 136 L146 140 L137.5 140Z" fill="url(#blu)" stroke="#4a5a8a" stroke-width="0.8"/>
<path d="M140 137 L144 132" stroke="#2a60c0" stroke-width="1"/>
<!-- row3 -->
<path d="M118 147 L121 145.5 L124 145.5 L124 153 L127 153 L127 159.5 L118 159.5Z" fill="url(#blu)" stroke="#4a4a6a" stroke-width="0.8"/>
<path d="M124 147 L126.5 145.5 L130 145.5 L132 147 M126 151 L131 151" stroke="#8a9ac0" stroke-width="0.9" stroke-dasharray="1.2 0.8" fill="none"/>
<path d="M120.5 150.5 L124.5 150.5" stroke="#3a80d0" stroke-width="1"/>
<path d="M138.5 150.5 L141 150.5 L141 155 L151 155 L151 159.5 L138.5 159.5Z" fill="url(#blu)" stroke="#4a4a6a" stroke-width="0.8"/>
<path d="M146.5 149 L146.5 156" stroke="#2a70c0" stroke-width="1.2"/><circle cx="146.8" cy="147.5" r="2.6" fill="#40d040" stroke="#2a9a2a" stroke-width="0.5"/>
<!-- row4 -->
<path d="M117.5 168 L122 166.5 L122 176.5 L117.5 178Z" fill="#40c040" stroke="#208a20" stroke-width="0.6"/>
<path d="M124 171 L127.5 170 L127.5 177 L124 178Z" fill="#40c040" stroke="#208a20" stroke-width="0.6"/>
<path d="M128.5 171 L132.5 170.5 L131 175.5 L128 176.5Z" fill="#cce0f4" stroke="#3a70c0" stroke-width="0.7"/>
<path d="M130.2 181.5 L133.2 181.5 L133.2 178.5Z" fill="#111"/>
<ellipse cx="142.5" cy="173" rx="4.6" ry="5" fill="#c8c8e8" stroke="#606070" stroke-width="0.8"/>
<ellipse cx="147.3" cy="173" rx="4.6" ry="5" fill="#f4f4f8" stroke="#606070" stroke-width="0.8"/>
<!-- row5 -->
<rect x="121.5" y="191.5" width="5" height="8.5" fill="url(#yl3)" stroke="#b09040" stroke-width="0.6"/>
<path d="M122 193 L126 193" stroke="#e06030" stroke-width="1"/>
<path d="M128 192 L128 199" stroke="#e05080" stroke-width="0.6" stroke-dasharray="1 0.6"/>
<rect x="117.5" y="200" width="12.5" height="5.5" fill="url(#yl3)" stroke="#8a7a30" stroke-width="0.7"/>
<path d="M130.7 207.5 L133.7 207.5 L133.7 204.5Z" fill="#111"/>
<rect x="138.5" y="191.5" width="3.5" height="8.5" fill="url(#yl3)" stroke="#9a8a40" stroke-width="0.6"/>
<rect x="136.5" y="200" width="7" height="5" fill="url(#yl3)" stroke="#8a7a30" stroke-width="0.7"/>
<rect x="145" y="200" width="7" height="5" fill="url(#yl3)" stroke="#8a7a30" stroke-width="0.7"/>
<path d="M144 197 L147.5 197" stroke="#e03020" stroke-width="1.2"/><path d="M147 195 L149.5 197 L147 199Z" fill="#e03020"/>
<path d="M151.7 207.5 L154.7 207.5 L154.7 204.5Z" fill="#111"/>
<!-- row6 -->
<rect x="117.5" y="221" width="12" height="5.5" fill="url(#yl3)" stroke="#8a7a30" stroke-width="0.7"/>
<path d="M121 220 L124 213 L129 211.5 L131 214 L126.5 219Z" fill="#e8c070" stroke="#a08040" stroke-width="0.6"/>
<ellipse cx="122" cy="215.5" rx="2.5" ry="2.2" fill="#e8a0d0" opacity="0.9"/><path d="M125 221 L124 219" stroke="#222" stroke-width="0.8"/>
<!-- row7 -->
<path d="M115.5 240 L133 240" stroke="#333" stroke-width="0.8"/>
<path d="M122 237.5 L122 242.5 M119.5 240 L124.5 240" stroke="#2a80e0" stroke-width="1.2"/>
<path d="M125 242 L125 249.5 L126.8 248 L128.5 251 L129.8 250.3 L128.2 247.3 L130.5 247Z" fill="#fff" stroke="#333" stroke-width="0.8"/>
<path d="M130.7 253.0 L133.7 253.0 L133.7 250.0Z" fill="#111"/>
<path d="M138.5 240 L141.5 240 L141.5 245.5 L151.5 245.5 L151.5 250 L138.5 250Z" fill="#f0b060" stroke="#9a7030" stroke-width="0.7"/>
<rect x="138.5" y="240" width="3" height="6" fill="#f0e890"/>
<path d="M151.7 253.0 L154.7 253.0 L154.7 250.0Z" fill="#111"/>
<!-- row8 -->
<path d="M117.5 259 L119.5 257 L123 257 L123 264 L131.5 264 L131.5 270 L117.5 270Z" fill="url(#yl3)" stroke="#8a8a40" stroke-width="0.7"/>
<path d="M123 264 L131.5 264 L131.5 270 L123 270Z" fill="#f0a050"/><circle cx="127" cy="267" r="2" fill="#e04020"/>
<path d="M130.7 273.5 L133.7 273.5 L133.7 270.5Z" fill="#111"/>
<path d="M138.5 257 L141.5 257 L141.5 263 L147.5 263 L147.5 267 L138.5 267Z" fill="#f4c080" stroke="#9a7030" stroke-width="0.7"/>
<circle cx="147" cy="271" r="1.6" fill="none" stroke="#d04070" stroke-width="0.8"/><circle cx="151" cy="270" r="1.6" fill="none" stroke="#d04070" stroke-width="0.8"/><path d="M146 264 L150 269 M150 264 L147.5 269" stroke="#8a6a40" stroke-width="0.7"/>
<!-- row9 -->
<text x="124.5" y="290.8" font-family="Liberation Sans" font-weight="bold" font-size="7" text-anchor="middle" fill="#222">(XYZ)</text>
<path d="M124 291.5 L124 296.5 M121.5 294 L126.5 294" stroke="#2a80e0" stroke-width="1.2"/>
<path d="M130.7 299.0 L133.7 299.0 L133.7 296.0Z" fill="#111"/>
<path d="M145 283 L145 297" stroke="#2a70c0" stroke-width="1.2"/><path d="M145 282 L143.3 285.5 L146.7 285.5Z" fill="#1a3a80"/>
<path d="M145 292 L139 296.5 M145 292 L151 296.5" stroke="#222" stroke-width="1"/>
<path d="M151.7 299.0 L154.7 299.0 L154.7 296.0Z" fill="#111"/>
<!-- row10 -->
<circle cx="120" cy="304" r="1.3" fill="#222"/><path d="M120 304 L120 307 L117 309 M120 307 L123 308.5" stroke="#222" stroke-width="0.9" fill="none"/>
<path d="M117 315.5 L126 315.5" stroke="#222" stroke-width="0.9"/><path d="M116 315.5 L118 314 L118 317Z M127 315.5 L125 314 L125 317Z" fill="#222"/>
<path d="M127 309 L131 305 L131 313.5 L127 317Z" fill="#e8c060" stroke="#9a8a70" stroke-width="0.5"/>
<path d="M130.7 319.5 L133.7 319.5 L133.7 316.5Z" fill="#111"/>
<g><circle cx="142.5" cy="304.5" r="1.4" fill="#e080a0"/><circle cx="142.5" cy="308.5" r="1.2" fill="#2a60c0"/><circle cx="142.5" cy="312" r="1.4" fill="#e05050"/><circle cx="139.5" cy="314" r="1.3" fill="#2a60c0"/><circle cx="145.5" cy="314" r="1.3" fill="#2a60c0"/><circle cx="137" cy="315.5" r="1.3" fill="#2a80e0"/><circle cx="148" cy="316" r="1.3" fill="#e08080"/></g>
<path d="M151.7 319.5 L154.7 319.5 L154.7 316.5Z" fill="#111"/>
</svg>


<!-- viewport -->
<div class="a" style="left:158px;top:99px;width:938px;height:434px;background:linear-gradient(#1c2a45 0%,#24324d 33%,#2e3d57 56%,#35445d 62%,#5d6c86 76%,#8c9ab2 91%,#a0adc4 100%)"></div>

<svg class="a" style="left:158px;top:99px" width="940" height="434" viewBox="158 99 940 434">
<rect x="158" y="99" width="938" height="1" fill="#18212e"/>
<path d="M487 110 L546.7 110 L564 255 L768 523 L487 523Z" fill="#459641" stroke="#14301a" stroke-width="1"/>
<path d="M487 491.5 L487 523 L518 523" fill="none" stroke="#c4dc3c" stroke-width="1.4"/>
<text x="524" y="523.5" font-family="Liberation Sans" font-size="8.5" text-anchor="middle" fill="#d8f060">X</text>
<!-- triad -->
<path d="M233 489 L233 476" stroke="#18c018" stroke-width="3.2"/><path d="M233 468 L229 478 L237 478Z" fill="#18c018"/>
<path d="M237 493.5 L251 493.5" stroke="#b81010" stroke-width="3.4"/><path d="M259 493.5 L249.5 489.3 L249.5 497.7Z" fill="#b81010"/>
<circle cx="232.6" cy="493.6" r="4.4" fill="#10108a"/>
<path d="M229.3 488.8 L236 488.8 L229.8 497.6 L236.2 497.6" fill="none" stroke="#f4f4ff" stroke-width="1.5"/>
<text x="233.5" y="459" font-family="Liberation Sans" font-weight="bold" font-size="11.5" text-anchor="middle" fill="#f4f4f4">Y</text>
<text x="270" y="497.2" font-family="Liberation Sans" font-weight="bold" font-size="11.5" text-anchor="middle" fill="#f4f4f4">X</text>
<rect x="1096" y="99" width="2" height="434" fill="#cfcfcf"/>
<!-- view widget -->
<path d="M1024.3 150.3 L1024.3 123.8 A26.5 26.5 0 0 1 1050.8 150.3Z" fill="#1e6a74" stroke="#d8d8f4" stroke-width="1.5"/>
<path d="M1024.3 118 L1024.3 172" stroke="#d8d8f4" stroke-width="1.6"/>
<ellipse cx="1024.5" cy="117.2" rx="3.2" ry="2.6" fill="#d8d8f4"/>
<path d="M1010 172.2 L1044.5 172.2" stroke="#d8d8f4" stroke-width="1.6"/>
<circle cx="1024.3" cy="172.2" r="3.5" fill="#e01010"/>
<text x="1024.3" y="110.3" font-family="Liberation Sans" font-size="8" text-anchor="middle" fill="#e8e040">Y</text>
<text x="1057.5" y="152.8" font-family="Liberation Sans" font-size="8" text-anchor="middle" fill="#e8e040">X</text>
<text x="1024" y="152.5" font-family="Liberation Sans" font-size="7" text-anchor="middle" fill="#e8e040">Z</text>
</svg>
<svg class="a" style="left:0;top:533px" width="1098" height="73" viewBox="0 533 1098 73">
<defs>
<linearGradient id="band" x1="0" y1="0" x2="0" y2="1"><stop offset="0" stop-color="#ffffff"/><stop offset="0.15" stop-color="#f4f4f4"/><stop offset="0.55" stop-color="#d4d4d4"/><stop offset="0.85" stop-color="#bebebe"/><stop offset="1" stop-color="#c2c2c2"/></linearGradient>
</defs>
<rect x="109.5" y="533" width="988.5" height="28" fill="url(#band)"/>
<!-- SIMULIA -->
<g fill="none" stroke="#26a896" stroke-linecap="round">
<path d="M1025.5 538.8 L1030.5 538.8 L1027 544" stroke-width="1.4"/>
<path d="M1021 553 L1024.2 544.3 Q1028.5 544.8 1027.6 548.5 Q1026.6 552.5 1021 553Z" stroke-width="1.3"/>
<path d="M1034.8 544.3 L1031.2 544.3 Q1029 544.6 1029.4 546.8 Q1029.8 548.4 1031.6 549 Q1033.4 549.8 1032.6 551.6 Q1032 552.8 1029 552.8" stroke-width="1.5"/>
</g>
<text x="1040" y="551.8" font-family="Liberation Sans" font-weight="bold" font-style="italic" font-size="9" fill="#26a896" textLength="56" lengthAdjust="spacingAndGlyphs">SIMULIA</text>
<!-- message area -->
<rect x="0" y="561" width="1098" height="45" fill="#c8c8c8"/>
<rect x="0" y="559.5" width="1098" height="2.5" fill="#d6d6d6"/>
<rect x="31" y="562" width="1042.5" height="41.5" fill="#fff"/>
<rect x="31" y="562" width="1042.5" height="0.6" fill="#d0d0d0"/>
<rect x="0" y="603.5" width="1098" height="2.5" fill="#bdbdbd"/>
<!-- left buttons -->
<rect x="3" y="562" width="27.5" height="26.5" fill="#c4c4c4"/>
<rect x="3" y="562" width="27.5" height="0.8" fill="#ececec"/><rect x="3" y="562" width="0.8" height="26.5" fill="#ececec"/>
<rect x="3" y="587.6" width="27.5" height="1" fill="#505050"/>
<rect x="9" y="567.5" width="12.5" height="13" rx="1" fill="#f2f2e6" stroke="#7a7a7a" stroke-width="0.9"/>
<path d="M8 581 L13 576 L15.5 578.5 L10.5 583.5Z" fill="#b09040"/><path d="M13 576 L14.5 574.5 L17 577 L15.5 578.5Z" fill="#70a040"/>
<rect x="3" y="589" width="27.5" height="17" fill="#c8c8c8"/>
<rect x="6.5" y="592" width="18.5" height="14" fill="#f0e870" stroke="#8a8a30" stroke-width="0.8"/>
<path d="M10 597.5 L13 600.5 L10 603.5 M14 597.5 L17 600.5 L14 603.5 M18 597.5 L21 600.5 L18 603.5" fill="none" stroke="#222" stroke-width="1.2"/>
<!-- v scrollbar -->
<rect x="1073.5" y="562" width="11" height="41.5" fill="#dadada"/>
<rect x="1073.5" y="562.5" width="10.5" height="10.5" fill="#d0d0d0"/><rect x="1083.2" y="562.5" width="0.9" height="11" fill="#333"/><rect x="1073.5" y="572.5" width="10.5" height="0.9" fill="#333"/>
<path d="M1075.8 570 L1081.8 570 L1078.8 566.5Z" fill="#111"/>
<rect x="1073.5" y="588" width="10.5" height="3" fill="#c8c8c8"/><rect x="1073.5" y="587.5" width="10.5" height="0.9" fill="#333"/>
<rect x="1073.5" y="591.5" width="10.5" height="11" fill="#d0d0d0"/><rect x="1083.2" y="591.5" width="0.9" height="11" fill="#333"/><rect x="1073.5" y="601.8" width="10.5" height="0.9" fill="#333"/>
<path d="M1075.8 595 L1081.8 595 L1078.8 598.5Z" fill="#111"/><rect x="1075.8" y="599" width="6" height="1" fill="#111"/>
<g fill="#9a9a9a"><rect x="1094" y="596" width="1.2" height="1.2"/><rect x="1091" y="599" width="1.2" height="1.2"/><rect x="1094" y="599" width="1.2" height="1.2"/><rect x="1088" y="602" width="1.2" height="1.2"/><rect x="1091" y="602" width="1.2" height="1.2"/><rect x="1094" y="602" width="1.2" height="1.2"/></g>
<!-- bottom-dark bar -->
<rect x="438" y="604.3" width="222" height="1.7" fill="#3a3a3a"/>
</svg>
<div class="a mono msg" style="left:32px;top:570.1px">*CONCRETETENSIONDAMAGE, TYPE</div>
<div class="a mono msg" style="left:32px;top:579.1px">*PREPRINT</div>
<div class="a mono msg" style="left:32px;top:588.6px">The model "job" has been imported from an input file.</div>
<div class="a mono msg" style="left:32px;top:597.8px">Please scroll up to check for error and warning messages.</div>

</body></html>
